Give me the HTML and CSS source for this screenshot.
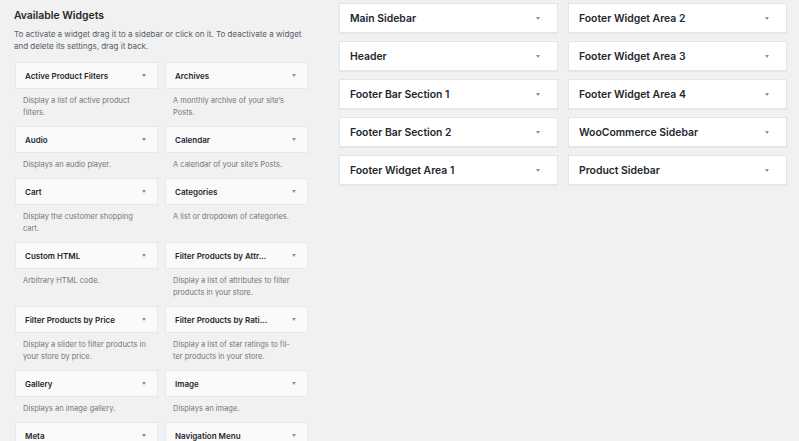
FILE: index.html
```html
<!DOCTYPE html>
<html lang="en">
<head>
  <meta charset="UTF-8">
  <title>Widgets</title>
  <link rel="stylesheet" href="styles.css">
</head>
<body>

<div class="wrap">
  <!-- Available widgets -->
  <div class="available">
    <h2>Available Widgets</h2>
    <p class="intro">To activate a widget drag it to a sidebar or click on it. To deactivate a widget and delete its settings, drag it back.</p>

    <div class="widget-list">
      <div class="widget">
        <div class="widget-top"><span>Active Product Filters</span><i class="arrow"></i></div>
        <div class="widget-desc">Display a list of active product filters.</div>
      </div>
      <div class="widget">
        <div class="widget-top"><span>Archives</span><i class="arrow"></i></div>
        <div class="widget-desc">A monthly archive of your site’s Posts.</div>
      </div>
      <div class="widget">
        <div class="widget-top"><span>Audio</span><i class="arrow"></i></div>
        <div class="widget-desc">Displays an audio player.</div>
      </div>
      <div class="widget">
        <div class="widget-top"><span>Calendar</span><i class="arrow"></i></div>
        <div class="widget-desc">A calendar of your site’s Posts.</div>
      </div>
      <div class="widget">
        <div class="widget-top"><span>Cart</span><i class="arrow"></i></div>
        <div class="widget-desc">Display the customer shopping cart.</div>
      </div>
      <div class="widget">
        <div class="widget-top"><span>Categories</span><i class="arrow"></i></div>
        <div class="widget-desc">A list or dropdown of categories.</div>
      </div>
      <div class="widget">
        <div class="widget-top"><span>Custom HTML</span><i class="arrow"></i></div>
        <div class="widget-desc">Arbitrary HTML code.</div>
      </div>
      <div class="widget">
        <div class="widget-top"><span>Filter Products by Attr...</span><i class="arrow"></i></div>
        <div class="widget-desc">Display a list of attributes to filter products in your store.</div>
      </div>
      <div class="widget">
        <div class="widget-top"><span>Filter Products by Price</span><i class="arrow"></i></div>
        <div class="widget-desc">Display a slider to filter products in your store by price.</div>
      </div>
      <div class="widget">
        <div class="widget-top"><span>Filter Products by Rati...</span><i class="arrow"></i></div>
        <div class="widget-desc">Display a list of star ratings to fil-<br>ter products in your store.</div>
      </div>
      <div class="widget">
        <div class="widget-top"><span>Gallery</span><i class="arrow"></i></div>
        <div class="widget-desc">Displays an image gallery.</div>
      </div>
      <div class="widget">
        <div class="widget-top"><span>Image</span><i class="arrow"></i></div>
        <div class="widget-desc">Displays an image.</div>
      </div>
      <div class="widget">
        <div class="widget-top"><span>Meta</span><i class="arrow"></i></div>
      </div>
      <div class="widget">
        <div class="widget-top"><span>Navigation Menu</span><i class="arrow"></i></div>
      </div>
    </div>
  </div>

  <!-- Registered sidebars -->
  <div class="sidebars">
    <div class="sidebar-col">
      <div class="sidebar-name"><span>Main Sidebar</span><i class="arrow"></i></div>
      <div class="sidebar-name"><span>Header</span><i class="arrow"></i></div>
      <div class="sidebar-name"><span>Footer Bar Section 1</span><i class="arrow"></i></div>
      <div class="sidebar-name"><span>Footer Bar Section 2</span><i class="arrow"></i></div>
      <div class="sidebar-name"><span>Footer Widget Area 1</span><i class="arrow"></i></div>
    </div>
    <div class="sidebar-col">
      <div class="sidebar-name"><span>Footer Widget Area 2</span><i class="arrow"></i></div>
      <div class="sidebar-name"><span>Footer Widget Area 3</span><i class="arrow"></i></div>
      <div class="sidebar-name"><span>Footer Widget Area 4</span><i class="arrow"></i></div>
      <div class="sidebar-name"><span>WooCommerce Sidebar</span><i class="arrow"></i></div>
      <div class="sidebar-name"><span>Product Sidebar</span><i class="arrow"></i></div>
    </div>
  </div>
</div>

</body>
</html>
```

FILE: styles.css
```css
html, body {
  margin: 0;
  height: 100%;
  overflow: hidden;
}

body {
  font-family: Inter, "Liberation Sans", sans-serif;
  background-color: #f1f1f1;
  color: #23282d;
}

.wrap {
  display: flex;
  align-items: flex-start;
}

/* Left panel */
.available {
  width: 294px;
  padding: 8px 0 0 14px;
}

.available h2 {
  margin: 0;
  font-size: 10.4px;
  line-height: 16px;
  font-weight: 600;
}

.intro {
  margin: 4px 0 10px;
  font-size: 8px;
  line-height: 12px;
  color: #555d66;
}

.widget-list {
  display: grid;
  grid-template-columns: 143px 143px;
  column-gap: 7px;
  margin-left: 1px;
}

.widget {
  margin-bottom: 7px;
}

.widget-top {
  display: flex;
  align-items: center;
  justify-content: space-between;
  height: 27px;
  box-sizing: border-box;
  padding: 0 11px 0 9px;
  background-color: #fafafa;
  border: 1px solid #e8e8e8;
  font-size: 8px;
  line-height: 10px;
  font-weight: 600;
}

.widget-desc {
  padding: 6px 8px 0;
  font-size: 7.5px;
  line-height: 12px;
  color: #72777c;
}

.arrow {
  width: 0;
  height: 0;
  border-left: 2.5px solid transparent;
  border-right: 2.5px solid transparent;
  border-top: 3.5px solid #8c8f94;
}

/* Right panel */
.sidebars {
  display: flex;
  gap: 10px;
  padding: 3px 0 0 31px;
}

.sidebar-col {
  display: flex;
  flex-direction: column;
  gap: 8px;
  width: 219px;
}

.sidebar-name {
  display: flex;
  align-items: center;
  justify-content: space-between;
  height: 30px;
  box-sizing: border-box;
  padding: 0 17px 0 10px;
  background-color: #fff;
  border: 1px solid #e5e5e5;
  box-shadow: 0 1px 1px rgba(0, 0, 0, 0.04);
  font-size: 10.4px;
  font-weight: 600;
}
```
